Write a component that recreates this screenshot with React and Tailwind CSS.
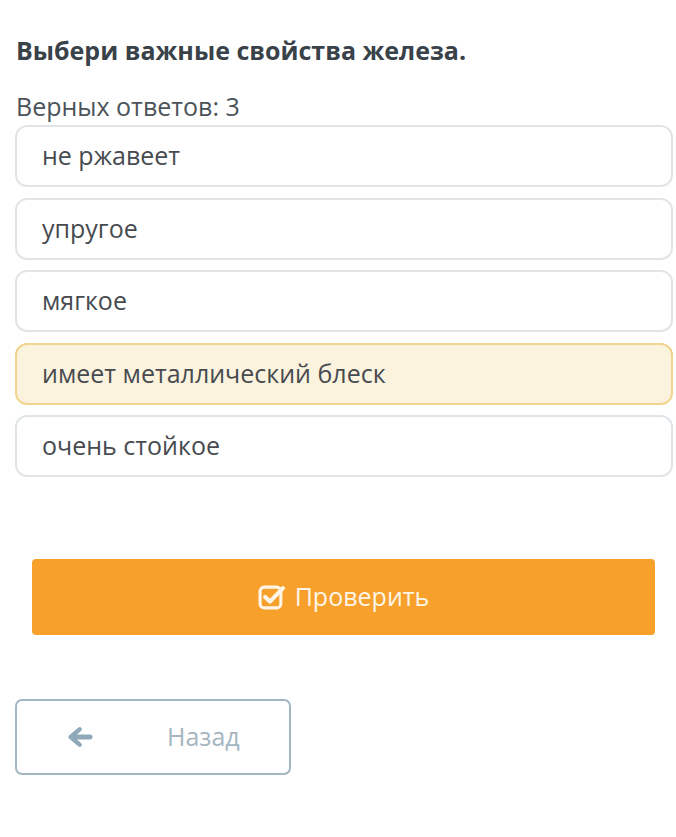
import React from 'react';

const options = [
  { text: 'не ржавеет', selected: false },
  { text: 'упругое', selected: false },
  { text: 'мягкое', selected: false },
  { text: 'имеет металлический блеск', selected: true },
  { text: 'очень стойкое', selected: false },
];

function CheckSquare() {
  return (
    <svg width="27" height="27" viewBox="0 0 26 26" fill="none">
      <rect x="2" y="3" width="20" height="20" rx="4" stroke="currentColor" strokeWidth="3" />
      <path d="M7 12.5l4.5 4.5L24 4" stroke="currentColor" strokeWidth="4" strokeLinecap="round" strokeLinejoin="round" />
    </svg>
  );
}

function ArrowLeft() {
  return (
    <svg width="26" height="22" viewBox="0 0 26 22" fill="currentColor">
      <path d="M11.5 1.5a2.2 2.2 0 0 1 3 3.1L10 8.5h13a2.5 2.5 0 0 1 0 5H10l4.5 3.9a2.2 2.2 0 0 1-3 3.1L2 12.6a2.2 2.2 0 0 1 0-3.2z" />
    </svg>
  );
}

export default function App() {
  return (
    <div className="w-[676px] h-[837px] bg-white font-['Open_Sans',sans-serif] overflow-hidden">
      <div className="pt-[33px] px-[15px]">
        <h1 className="ml-[1px] text-[25px] leading-[34px] font-bold text-[#3a4249]">
          Выбери важные свойства железа.
        </h1>
        <p className="mt-[23px] ml-[1px] text-[25px] leading-[32px] text-[#4b5359]">Верных ответов: 3</p>

        <div className="mt-[3px] flex flex-col gap-[10.5px] w-[658px]">
          {options.map((o) => (
            <div
              key={o.text}
              className={
                o.selected
                  ? 'h-[62px] flex items-center pl-[25px] rounded-[12px] border-2 border-[#f1d58f] bg-[#fcf3df] text-[25px] text-[#474b4f]'
                  : 'h-[62px] flex items-center pl-[25px] rounded-[12px] border-2 border-[#e1e5e8] bg-white text-[25px] text-[#474b4f]'
              }
            >
              {o.text}
            </div>
          ))}
        </div>

        <div className="mt-[82px] ml-[17px] w-[623px] h-[76px] rounded-[4px] bg-[#f8a02c] flex items-center justify-center gap-[10px] text-[#fdf6e8]">
          <CheckSquare />
          <span className="text-[25px]">Проверить</span>
        </div>

        <div className="mt-[64px] w-[276px] h-[76px] rounded-[7px] border-2 border-[#a3b6c2] flex items-center">
          <span className="ml-[50px] text-[#8fa9ba]">
            <ArrowLeft />
          </span>
          <span className="ml-[74px] text-[25px] text-[#a5b6c1]">Назад</span>
        </div>
      </div>
    </div>
  );
}
